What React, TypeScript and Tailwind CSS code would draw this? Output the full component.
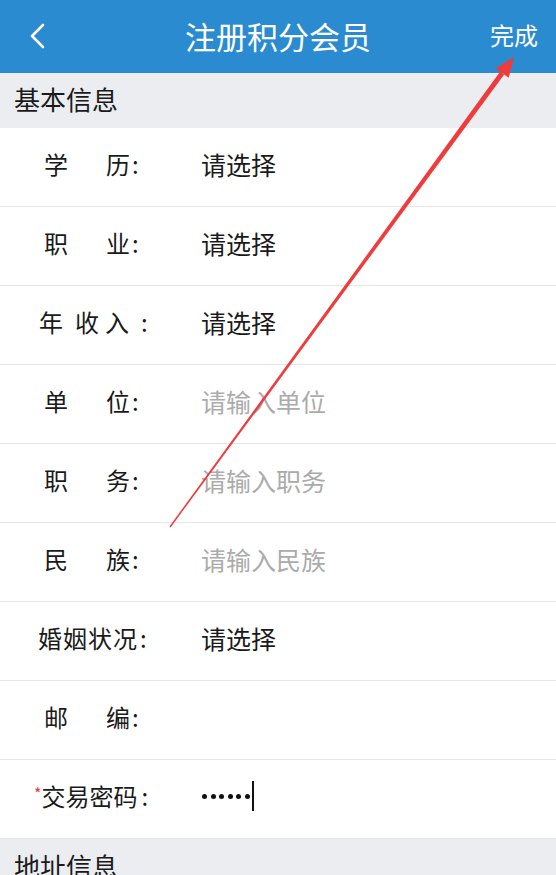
import React from "react";

const font = { fontFamily: '"Noto Sans CJK SC", "Noto Sans", sans-serif' };

function Row({ label, value, placeholder, children }: { label: React.ReactNode; value?: string; placeholder?: string; children?: React.ReactNode }) {
  return (
    <div className="flex h-[79px] items-center border-b border-[#e6e6e6] bg-white pb-[6px]">
      <div className="w-[201px] shrink-0 text-[24px] leading-none text-[#1a1a1a]">{label}</div>
      <div className="flex-1 text-[25px] leading-none">
        {value && <span className="text-[#1a1a1a]">{value}</span>}
        {placeholder && <span className="text-[#ababab]">{placeholder}</span>}
        {children}
      </div>
    </div>
  );
}

function Two({ a, b }: { a: string; b: string }) {
  return (
    <div className="flex items-center pl-[44px]">
      <span>{a}</span>
      <span className="ml-[38px]">{b}</span>
      <span className="ml-[2px]">:</span>
    </div>
  );
}

export default function App() {
  return (
    <div className="relative h-[875px] w-[556px] overflow-hidden bg-[#ebedf0]" style={font}>
      <div className="flex h-[73px] items-center justify-between bg-[#2b8bd0] px-[28px]">
        <svg width="18" height="26" viewBox="0 0 18 26" className="ml-[1px] mt-[-1px]">
          <path d="M14 2 L3 13 L14 24" fill="none" stroke="white" strokeWidth="2.6" strokeLinecap="round" strokeLinejoin="round" />
        </svg>
        <div className="pointer-events-none absolute left-0 right-0 top-0 flex h-[73px] items-center justify-center pb-[2px]">
          <span className="text-[31px] leading-none text-white">注册积分会员</span>
        </div>
        <span className="mr-[-10px] mt-[-3px] text-[24px] leading-none text-white">完成</span>
      </div>
      <div className="flex h-[55px] items-center pb-[3px] pl-[14px] text-[26px] leading-none text-[#1a1a1a]">基本信息</div>
      <Row label={<Two a="学" b="历" />} value="请选择" />
      <Row label={<Two a="职" b="业" />} value="请选择" />
      <Row
        label={
          <div className="flex items-center pl-[39px]">
            <span>年</span>
            <span className="ml-[12px]">收</span>
            <span className="ml-[6px]">入</span>
            <span className="ml-[12px]">:</span>
          </div>
        }
        value="请选择"
      />
      <Row label={<Two a="单" b="位" />} placeholder="请输入单位" />
      <Row label={<Two a="职" b="务" />} placeholder="请输入职务" />
      <Row label={<Two a="民" b="族" />} placeholder="请输入民族" />
      <Row
        label={
          <div className="flex items-center pl-[38px]">
            <span className="tracking-[1px]">婚姻状况</span>
            <span className="ml-[2px]">:</span>
          </div>
        }
        value="请选择"
      />
      <Row label={<Two a="邮" b="编" />} />
      <Row
        label={
          <div className="flex items-center pl-[34px]">
            <span className="mt-[-6px] text-[16px] text-[#e23b3b]">*</span>
            <span>交易密码</span>
            <span className="ml-[4px]">:</span>
          </div>
        }
      >
        <div className="flex items-center">
          <div className="ml-[1px] flex items-center gap-[3.5px]">
            {[0, 1, 2, 3, 4, 5].map((i) => (
              <span key={i} className="h-[5px] w-[5px] rounded-full bg-[#111]" />
            ))}
          </div>
          <span className="ml-[2px] h-[30px] w-[2px] bg-[#111]" />
        </div>
      </Row>
      <div className="flex h-[40px] items-center pl-[14px] pt-[14px] text-[26px] leading-none text-[#1a1a1a]">地址信息</div>

      <svg className="pointer-events-none absolute left-0 top-0" width="556" height="875" viewBox="0 0 556 875">
        <polygon points="170.6,527.4 169.4,526.6 500.2,71.6 504.2,74.6" fill="#ef3b3b" />
        <polygon points="514,57 508.7,77.8 495.7,68.4" fill="#ef3b3b" />
      </svg>
    </div>
  );
}
